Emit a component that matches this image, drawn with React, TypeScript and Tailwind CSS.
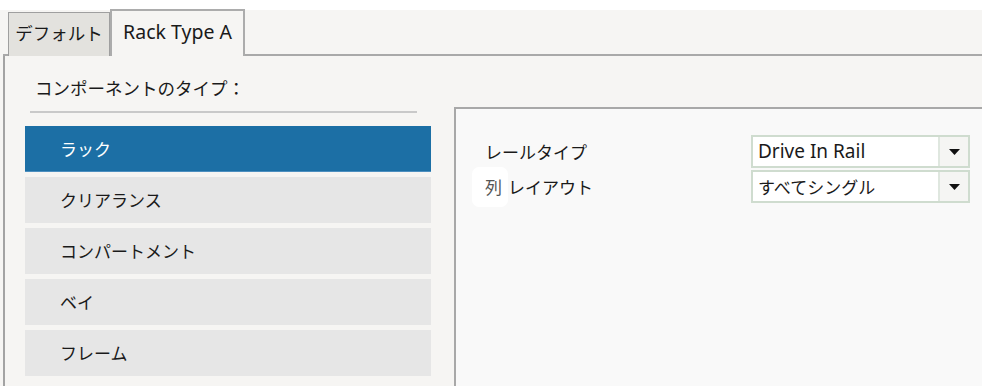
import React from "react";

const JP = { fontFamily: '"Noto Sans CJK JP", "Noto Sans", sans-serif' };

function Dropdown({ value, latin }: { value: string; latin?: boolean }) {
  return (
    <div className="w-[219px] h-[33px] border-2 border-[#cfdccf] bg-white flex">
      <div
        className={
          "flex-1 flex items-center pl-[5px] text-[#1a1a1a] " +
          (latin ? "text-[19px]" : "text-[17px]")
        }
        style={latin ? { fontFamily: '"Noto Sans", sans-serif' } : JP}
      >
        {value}
      </div>
      <div className="w-[30px] bg-[#f5f5f3] border-l-2 border-[#dfe7df] flex items-center justify-center">
        <svg width="11" height="6" viewBox="0 0 11 6">
          <polygon points="0,0 11,0 5.5,6" fill="#111" />
        </svg>
      </div>
    </div>
  );
}

export default function App() {
  const items = ["ラック", "クリアランス", "コンパートメント", "ベイ", "フレーム"];
  return (
    <div className="w-[997px] h-[386px] bg-white overflow-hidden" style={JP}>
      <div className="mt-[10px] w-[982px] h-[376px] bg-[#f6f5f3] flex flex-col">
        {/* tab strip */}
        <div className="h-[46px] ml-[3px] border-b-2 border-[#a9a9a9] flex items-end pl-[5px]">
          <div className="w-[102px] h-[44px] border border-b-0 border-[#9f9f9f] bg-[#e3e2de] flex items-center justify-center text-[17.5px] text-[#1a1a1a] -mb-[2px] pb-[2px]">
            デフォルト
          </div>
          <div
            className="w-[135px] h-[47px] border-2 border-b-0 border-[#acacac] bg-[#f6f5f3] flex items-center justify-center text-[19.5px] text-[#1a1a1a] -mb-[2px] pb-[4px]"
            style={{ fontFamily: '"Noto Sans", sans-serif' }}
          >
            Rack Type A
          </div>
        </div>
        {/* body */}
        <div className="flex-1 ml-[3px] border-l-2 border-[#a3a3a3] flex">
          <div className="w-[449px] flex flex-col">
            <div className="pt-[20px] pl-[30px] h-[44px] leading-[24px] text-[17.5px] text-[#1a1a1a]">
              コンポーネントのタイプ：
            </div>
            <div className="mt-[11px] ml-[25px] w-[387px] h-[2px] bg-[#c9c9c9]" />
            <div className="mt-[13px] ml-[20px] w-[406px] flex flex-col gap-[5px]">
              {items.map((t, i) => (
                <div
                  key={t}
                  className={
                    "h-[46px] flex items-center pl-[35px] text-[17px] " +
                    (i === 0
                      ? "bg-[#1c6fa5] text-white border-b border-[#4d8fbf]"
                      : "bg-[#e6e6e6] text-[#1a1a1a]")
                  }
                >
                  {t}
                </div>
              ))}
            </div>
          </div>
          <div className="flex-1 mt-[51px] border-l-2 border-t-2 border-[#a8a8a8] bg-[#f9f9f9] pt-[26px] pl-[29px] flex flex-col gap-[2px]">
            <div className="h-[33px] flex items-center">
              <div className="w-[266px] text-[17px] text-[#1a1a1a]">レールタイプ</div>
              <Dropdown value="Drive In Rail" latin />
            </div>
            <div className="h-[33px] flex items-center">
              <div className="w-[266px] text-[17px] text-[#1a1a1a] flex items-center">
                <span className="h-[40px] -ml-[13px] pl-[13px] pr-[6px] bg-white rounded-[7px] flex items-center text-[#555]">
                  列
                </span>
                <span>レイアウト</span>
              </div>
              <Dropdown value="すべてシングル" />
            </div>
          </div>
        </div>
      </div>
    </div>
  );
}
